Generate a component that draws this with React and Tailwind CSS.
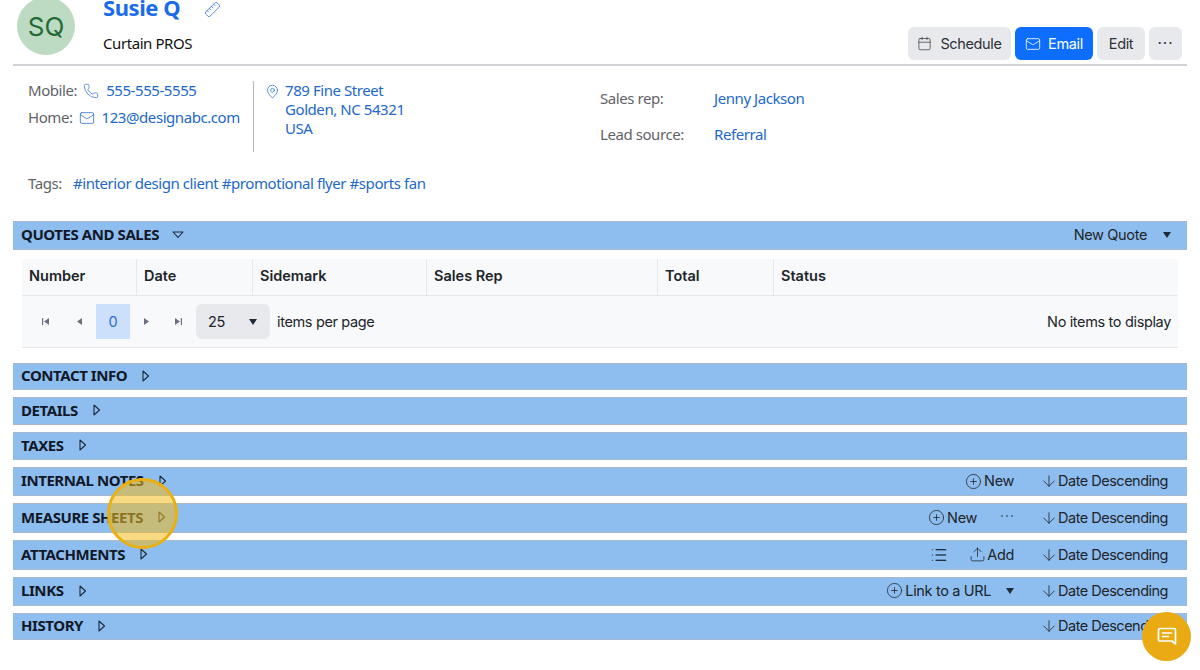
import React from 'react';
import { ArrowDown, Calendar, CirclePlus, List, Mail, MapPin, Phone, Ruler, Upload } from 'lucide-react';

const BODY = "font-['Noto_Sans',sans-serif] tracking-[-0.43px]";
const INTER = "font-['Inter',sans-serif]";
const UI_TEXT = `text-[14.5px] tracking-[-0.35px] text-[#212529] ${INTER}`;

// Small outlined triangle used on section headers
const Caret = ({ open = false }) => (
  <svg width="12" height="12" viewBox="0 0 12 12" fill="none" stroke="#1f2937" strokeWidth="1.1" strokeLinejoin="round" className="shrink-0">
    {open ? <path d="M1 3h10L6 8.500z" /> : <path d="M3 1v10l5.500-5z" />}
  </svg>
);

const SolidCaret = () => (
  <svg width="8" height="6" viewBox="0 0 8 6" fill="#1f2937"><path d="M0 0h8L4 6z" /></svg>
);

const DateSort = () => (
  <span className={`flex items-center whitespace-nowrap ${UI_TEXT}`}>
    <ArrowDown size={18} strokeWidth={1.1} />
    <span className="tracking-[-0.5px]">Date Descending</span>
  </span>
);

const AddAction = ({ label }) => (
  <span className={`flex items-center gap-[2px] whitespace-nowrap ${UI_TEXT}`}>
    <CirclePlus size={17} strokeWidth={1.1} />
    {label}
  </span>
);

const sections = [
  { title: 'CONTACT INFO', cls: 'h-[27px] mt-[15px]' },
  { title: 'DETAILS', cls: 'h-[28px] mt-[7px]' },
  { title: 'TAXES', cls: 'h-[28px] mt-[7px]' },
  {
    title: 'INTERNAL NOTES',
    cls: 'h-[29px] mt-[7px]',
    actions: (
      <>
        <AddAction label="New" />
        <DateSort />
      </>
    ),
  },
  {
    title: 'MEASURE SHEETS',
    cls: 'h-[30px] mt-[7px]',
    actions: (
      <>
        <AddAction label="New" />
        <svg width="14" height="4" viewBox="0 0 14 4" fill="#1f2937" className="mb-[3px] ml-[-3px]">
          <circle cx="2" cy="2" r="0.8" />
          <circle cx="7" cy="2" r="0.8" />
          <circle cx="12" cy="2" r="0.8" />
        </svg>
        <DateSort />
      </>
    ),
  },
  {
    title: 'ATTACHMENTS',
    cls: 'h-[30px] mt-[7px]',
    actions: (
      <>
        <List size={18} strokeWidth={1.4} className="mr-[-5px]" />
        <span className={`flex items-center gap-[1px] ${UI_TEXT}`}>
          <Upload size={17} strokeWidth={1.1} />
          Add
        </span>
        <DateSort />
      </>
    ),
  },
  {
    title: 'LINKS',
    cls: 'h-[29px] mt-[7px]',
    actions: (
      <>
        <span className="mb-[1px] flex items-center gap-[15px]">
          <AddAction label="Link to a URL" />
          <SolidCaret />
        </span>
        <DateSort />
      </>
    ),
  },
  { title: 'HISTORY', cls: 'h-[27px] mt-[7px]', actions: <DateSort /> },
];

const SectionBar = ({ title, cls, open, actions }) => (
  <div className={`flex items-center justify-between border-t border-b border-t-[#a9b9cb] border-b-[#a9b9cb] bg-[#8ebdf0] pl-[8px] pr-[19px] ${cls}`}>
    <div className="flex items-center">
      <span className={`pb-[2px] text-[15px] font-bold text-[#111827] ${BODY}`}>{title}</span>
      <span className="mb-[2px] ml-[13px]">
        <Caret open={open} />
      </span>
    </div>
    {actions && <div className="mb-[1px] flex items-center gap-[26px]">{actions}</div>}
  </div>
);

const columns = [
  { label: 'Number', cls: 'w-[115px]' },
  { label: 'Date', cls: 'w-[116px]' },
  { label: 'Sidemark', cls: 'w-[174px]' },
  { label: 'Sales Rep', cls: 'w-[231px]' },
  { label: 'Total', cls: 'w-[116px]' },
  { label: 'Status', cls: 'flex-1 border-r-0' },
];

const PagerIcon = ({ d }) => (
  <svg width="9" height="9" viewBox="0 0 9 9" fill="#6b7280"><path d={d} /></svg>
);

export default function App() {
  return (
    <div className={`relative h-[670px] w-[1200px] overflow-hidden bg-white px-[13px] ${BODY}`}>
      {/* Header */}
      <div className="flex h-[66px] justify-between border-b-2 border-b-[#d1d3d6]">
        <div className="flex">
          <div className={`ml-[4px] mt-[-3px] flex h-[58px] w-[58px] items-center justify-center rounded-full bg-[#bddac2] text-[26px] tracking-normal text-[#226b36] ${INTER}`}>
            SQ
          </div>
          <div className="ml-[28px]">
            <div className="mt-[-8px] flex h-[30px] items-center">
              <span className="text-[22px] font-bold text-[#1a6ce8]">Susie Q</span>
              <Ruler size={17} strokeWidth={1.1} className="ml-[24px] mt-[4px] -scale-x-100 text-[#2f6fd0]" />
            </div>
            <div className="mt-[10px] text-[15px] text-[#111]">Curtain PROS</div>
          </div>
        </div>
        <div className={`mr-[5px] mt-[27px] flex h-[33px] gap-[4px] ${UI_TEXT}`}>
          <button className="flex w-[103px] items-center justify-center gap-[8px] rounded-[6px] bg-[#e8e9ec] text-[#2d3138]">
            <Calendar size={15} strokeWidth={1.1} />
            Schedule
          </button>
          <button className="flex w-[78px] items-center justify-center gap-[7px] rounded-[6px] bg-[#0d6efd] text-white">
            <Mail size={16} strokeWidth={1.2} />
            Email
          </button>
          <button className="w-[48px] rounded-[6px] bg-[#e8e9ec] text-[#2d3138]">Edit</button>
          <button className="w-[33px] rounded-[6px] bg-[#e8e9ec] text-[15px] tracking-[1px] text-[#2d3138]">···</button>
        </div>
      </div>

      {/* Contact details */}
      <div className="flex h-[86px] pl-[15px] pt-[15px] text-[15px] leading-[19px]">
        <div className="w-[225px]">
          <div className="flex h-[19px] items-center text-[#5f6368]">
            Mobile:
            <Phone size={16} strokeWidth={1.1} className="ml-[6px] text-[#2f6fd0]" />
            <span className="ml-[7px] text-[#2268c9]">555-555-5555</span>
          </div>
          <div className="mt-[8px] flex h-[19px] items-center text-[#5f6368]">
            Home:
            <Mail size={16} strokeWidth={1.2} className="ml-[6px] text-[#2f6fd0]" />
            <span className="ml-[7px] text-[#2268c9]">123@designabc.com</span>
          </div>
        </div>
        <div className="flex h-[71px] w-[347px] border-l border-l-[#b5b7ba] pl-[11px]">
          <MapPin size={15} strokeWidth={1.2} className="mt-[3px] text-[#2f6fd0]" />
          <div className="ml-[5px] text-[#2268c9]">
            789 Fine Street
            <br />
            Golden, NC 54321
            <br />
            USA
          </div>
        </div>
        <div>
          <div className="mt-[8px] flex h-[19px] items-center text-[#5f6368]">
            <span className="w-[114px]">Sales rep:</span>
            <span className="text-[#2268c9]">Jenny Jackson</span>
          </div>
          <div className="mt-[17px] flex h-[19px] items-center text-[#5f6368]">
            <span className="w-[114px]">Lead source:</span>
            <span className="text-[#2268c9]">Referral</span>
          </div>
        </div>
      </div>

      {/* Tags */}
      <div className="flex h-[69px] pl-[15px] pt-[22px] text-[15px] leading-[19px]">
        <span className="w-[45px] text-[#5f6368]">Tags:</span>
        <span className="text-[#2268c9]">#interior design client #promotional flyer #sports fan</span>
      </div>

      {/* Quotes and sales */}
      <SectionBar
        title="QUOTES AND SALES"
        cls="h-[29px]"
        open
        actions={
          <span className={`mr-[-3px] flex items-center gap-[16px] ${UI_TEXT}`}>
            New Quote
            <SolidCaret />
          </span>
        }
      />
      <div className={`mx-[9px] mt-[9px] border-b border-b-[#e6e8eb] bg-[#f8f9fb] tracking-normal ${INTER}`}>
        <div className="flex h-[37px] border-b border-b-[#e6e8eb]">
          {columns.map((col) => (
            <div key={col.label} className={`flex items-center border-r border-r-[#e6e8eb] pb-[2px] pl-[7px] text-[14.5px] font-semibold text-[#212529] ${col.cls}`}>
              {col.label}
            </div>
          ))}
        </div>
        <div className={`flex h-[51px] items-center justify-between pl-[19px] pr-[7px] ${UI_TEXT}`}>
          <div className="flex items-center">
            <PagerIcon d="M1 1h1.200v7H1zM8 1v7L3 4.500z" />
            <span className="ml-[25px]"><PagerIcon d="M7 1v7L2 4.500z" /></span>
            <span className="ml-[12px] flex h-[35px] w-[34px] items-center justify-center bg-[#cde0fb] text-[#2b6fd6]">0</span>
            <span className="ml-[12px]"><PagerIcon d="M2 1v7l5-3.500z" /></span>
            <span className="ml-[23px]"><PagerIcon d="M1 1v7l5-3.500zM6.800 1H8v7H6.800z" /></span>
            <div className="ml-[13px] flex h-[35px] w-[74px] items-center justify-between rounded-[6px] bg-[#e8e9ec] pl-[12px] pr-[13px]">
              <span>25</span>
              <SolidCaret />
            </div>
            <span className="ml-[7px]">items per page</span>
          </div>
          <span>No items to display</span>
        </div>
      </div>

      {/* Collapsed sections */}
      {sections.map((section) => (
        <SectionBar key={section.title} {...section} />
      ))}

      {/* Click highlight */}
      <div className="absolute left-[107px] top-[478px] h-[71px] w-[71px] rounded-full border-[3px] border-[#eab011] bg-[#f3bb1c]/55" />

      {/* Chat launcher */}
      <button className="absolute left-[1142px] top-[612px] flex h-[49px] w-[49px] items-center justify-center rounded-full bg-[#e9aa13]">
        <svg width="20" height="19" viewBox="0 0 20 19" fill="none" stroke="white" strokeWidth="1.7" strokeLinejoin="round" strokeLinecap="round">
          <path d="M3 1.500h14a1.500 1.500 0 0 1 1.500 1.500v14l-3.500-3H3A1.500 1.500 0 0 1 1.500 12.500V3A1.500 1.500 0 0 1 3 1.500z" />
          <path d="M5.500 6h9M5.500 9.500h6" />
        </svg>
      </button>
    </div>
  );
}
